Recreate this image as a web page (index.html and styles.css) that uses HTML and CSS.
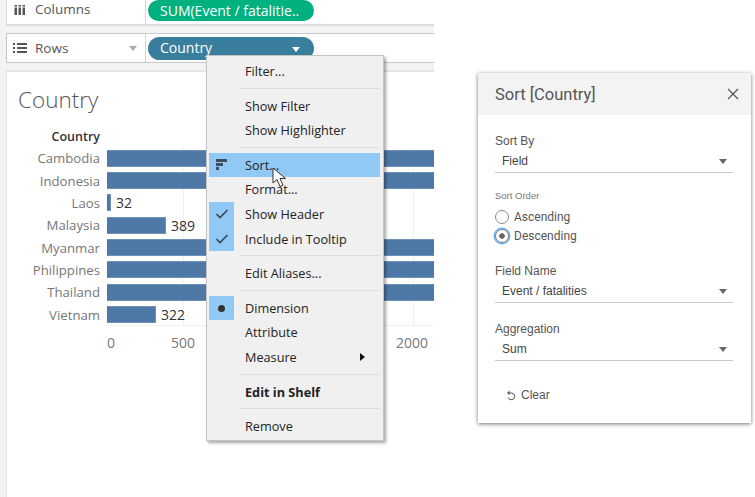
FILE: index.html
```html
<!DOCTYPE html>
<html lang="en">
<head>
<meta charset="utf-8">
<title>Sort Country</title>
<link rel="stylesheet" href="styles.css">
</head>
<body>
<div class="page">
  <section class="workspace">
    <div class="shelf shelf-columns">
      <div class="shelf-label">
        <svg class="shelf-icon" width="12" height="12" viewBox="0 0 12 12"><path d="M.5 4.5H3V12H.5zM4.5 4.5H7V12H4.5zM8.5 4.5H11V12H8.5zM.5 2H3v1.5H.5zM4.5 2H7v1.5H4.5zM8.5 2H11v1.5H8.5z" fill="#555"/></svg>
        <span>Columns</span>
      </div>
      <div class="shelf-body"><div class="pill pill-green">SUM(Event / fatalitie..</div></div>
    </div>
    <div class="shelf shelf-rows">
      <div class="shelf-label">
        <svg class="shelf-icon" width="14" height="12" viewBox="0 0 14 12"><path d="M0 1h2v2H0zM4 1h10v2H4zM0 5h2v2H0zM4 5h10v2H4zM0 9h2v2H0zM4 9h10v2H4z" fill="#555"/></svg>
        <span>Rows</span>
        <i class="shelf-caret"></i>
      </div>
      <div class="shelf-body"><div class="pill pill-blue">Country<i class="pill-caret"></i></div></div>
    </div>
    <div class="sheet">
      <h1 class="sheet-title">Country</h1>
      <div class="chart">
        <div class="col-head">Country</div>
        <div class="plot">
          <i class="grid grid-500"></i>
          <i class="grid grid-2000"></i>
          <div class="row"><span class="row-label">Cambodia</span><span class="bar bar-full"></span></div>
          <div class="row"><span class="row-label">Indonesia</span><span class="bar bar-full"></span></div>
          <div class="row"><span class="row-label">Laos</span><span class="bar" style="width:4px"></span><span class="value">32</span></div>
          <div class="row"><span class="row-label">Malaysia</span><span class="bar" style="width:59px"></span><span class="value">389</span></div>
          <div class="row"><span class="row-label">Myanmar</span><span class="bar bar-full"></span></div>
          <div class="row"><span class="row-label">Philippines</span><span class="bar bar-full"></span></div>
          <div class="row"><span class="row-label">Thailand</span><span class="bar bar-full"></span></div>
          <div class="row"><span class="row-label">Vietnam</span><span class="bar" style="width:49px"></span><span class="value">322</span></div>
        </div>
        <div class="axis"><span class="tick tick-0">0</span><span class="tick tick-500">500</span><span class="tick tick-2000">2000</span></div>
      </div>
    </div>

    <div class="menu">
      <div class="item">Filter...</div>
      <div class="sep sep-a"></div>
      <div class="item">Show Filter</div>
      <div class="item">Show Highlighter</div>
      <div class="sep"></div>
      <div class="item item-active">
        <span class="gutter"><svg width="12" height="12" viewBox="0 0 12 12"><path d="M0 0h11v3H0zM0 4h7v3H0zM0 8h3v3H0z" fill="#3d4f5f"/></svg></span>Sort...
      </div>
      <div class="item">Format...</div>
      <div class="item"><span class="gutter gutter-on"><svg width="14" height="10" viewBox="0 0 14 10"><path d="M1.5 5l3.5 3.5L12.5 1" fill="none" stroke="#3c4650" stroke-width="1.6"/></svg></span>Show Header</div>
      <div class="item"><span class="gutter gutter-on"><svg width="14" height="10" viewBox="0 0 14 10"><path d="M1.5 5l3.5 3.5L12.5 1" fill="none" stroke="#3c4650" stroke-width="1.6"/></svg></span>Include in Tooltip</div>
      <div class="sep"></div>
      <div class="item">Edit Aliases...</div>
      <div class="sep"></div>
      <div class="item"><span class="gutter gutter-on"><i class="dot"></i></span>Dimension</div>
      <div class="item">Attribute</div>
      <div class="item item-sub">Measure<i class="sub-arrow"></i></div>
      <div class="sep"></div>
      <div class="item item-bold">Edit in Shelf</div>
      <div class="sep"></div>
      <div class="item">Remove</div>
    </div>
    <svg class="cursor" width="18" height="22" viewBox="0 0 18 22"><path d="M1 1v15l4-3.5 3 7 3-1.3-3-6.7h5.5z" fill="#fff" stroke="#333" stroke-width="1"/></svg>
  </section>

  <section class="dialog">
    <header class="dialog-head">
      <h2>Sort [Country]</h2>
      <svg width="12" height="12" viewBox="0 0 12 12"><path d="M1 1l10 10M11 1L1 11" stroke="#555" stroke-width="1.2" fill="none"/></svg>
    </header>
    <div class="dialog-body">
      <div class="field">
        <label>Sort By</label>
        <div class="select">Field<i class="select-caret"></i></div>
      </div>
      <div class="order">
        <div class="order-title">Sort Order</div>
        <div class="radio"><i class="radio-mark"></i>Ascending</div>
        <div class="radio"><i class="radio-mark radio-on"></i>Descending</div>
      </div>
      <div class="field field-name">
        <label>Field Name</label>
        <div class="select">Event / fatalities<i class="select-caret"></i></div>
      </div>
      <div class="field field-agg">
        <label>Aggregation</label>
        <div class="select">Sum<i class="select-caret"></i></div>
      </div>
      <div class="clear">
        <svg width="10" height="11" viewBox="0 0 10 11"><path d="M2.6 3H6a3.4 3.4 0 1 1-3.9 4.4" fill="none" stroke="#555" stroke-width="1"/><path d="M3.6 0.6v4.4L1 3z" fill="#555"/></svg>
        <span>Clear</span>
      </div>
    </div>
  </section>
</div>
</body>
</html>
```

FILE: styles.css
```css
* { box-sizing: border-box; }
html, body { margin: 0; padding: 0; }
body { width: 755px; height: 497px; overflow: hidden; background: #fff; font-family: "Liberation Sans", Arial, sans-serif; }
.page { display: flex; height: 497px; }

.workspace { position: relative; width: 434px; height: 497px; flex: none; background: #f3f3f3; padding-left: 6px; }

.shelf { display: flex; background: #fff; font-family: "Open Sans", sans-serif; font-size: 13.5px; color: #555; }
.shelf-columns { height: 26px; border-bottom: 2px solid #dcdcdc; border-left: 1px solid #dcdcdc; }
.shelf-rows { height: 30px; margin-top: 7px; border: 1px solid #c8c8c8; border-width: 1px 0 1px 1px; }
.shelf-label { position: relative; width: 139px; display: flex; align-items: center; border-right: 1px solid #d4d4d4; padding-left: 6px; gap: 8px; flex: none; }
.shelf-columns .shelf-label { padding-left: 7px; gap: 9px; height: 24px; padding-bottom: 6px; }
.shelf-caret { position: absolute; right: 8px; top: 12px; border: 4px solid transparent; border-top: 5px solid #aaa; border-bottom: 0; }
.shelf-body { flex: 1; padding-left: 2px; }
.pill { width: 166px; color: #fff; display: flex; align-items: center; position: relative; font-size: 14px; padding-left: 12px; }
.pill-green { height: 21px; background: #00b180; border-radius: 11px; }
.pill-blue { height: 23px; margin-top: 3px; padding-bottom: 2px; background: #3a7e9e; border-radius: 12px; }
.pill-caret { position: absolute; right: 14px; top: 10px; border: 4px solid transparent; border-top: 5px solid #fff; border-bottom: 0; }

.sheet { margin-top: 7px; height: 430px; background: #fff; border-top: 2px solid #e4e4e4; border-left: 1px solid #e4e4e4; overflow: hidden; }
.sheet-title { margin: 0; padding: 14px 0 0 11px; height: 50px; font: 300 22.5px/28px "Open Sans", sans-serif; color: #555; }
.chart { position: relative; font-family: "Open Sans", sans-serif; font-size: 13.2px; }
.col-head { height: 25px; padding-right: 7px; width: 100px; text-align: right; font-weight: 600; font-size: 12.5px; line-height: 25px; color: #333; padding-top: 2px; }
.plot { position: relative; height: 179px; }
.plot::after { content: ""; position: absolute; left: 100px; right: 0; bottom: 0; height: 1px; background: #f0f0f0; }
.grid { position: absolute; top: 0; bottom: 0; width: 1px; background: #f0f0f0; }
.grid-500 { left: 176px; }
.grid-2000 { left: 406px; }
.row { position: relative; display: flex; align-items: center; height: 22.35px; }
.row-label { width: 93px; text-align: right; color: #777; margin-right: 7px; flex: none; white-space: nowrap; }
.bar { height: 17px; background: #4e79a7; border: 1px solid #6d92b8; border-width: 1px 1px 1px 0; flex: none; }
.bar-full { width: 340px; }
.value { margin-left: 5px; color: #333; font-size: 14px; }
.axis { position: relative; height: 24px; color: #777; font-size: 14px; }
.tick { position: absolute; top: 7px; }
.tick-0 { left: 100px; }
.tick-500 { left: 164px; }
.tick-2000 { left: 389px; }

.menu { position: absolute; left: 206px; top: 55px; width: 178px; height: 386px; background: #f0f0f0; border: 1px solid #c4c4c4; box-shadow: 2px 2px 3px rgba(0,0,0,.35); padding: 3px 3px 0 2px; font-family: "Open Sans", sans-serif; font-size: 12.7px; color: #222; z-index: 2; }
.item { position: relative; height: 24.6px; line-height: 24px; padding-left: 36px; white-space: nowrap; }
.item-active { background: #90c8f6; }
.item-bold { font-weight: 700; }
.gutter { position: absolute; left: 0; top: 0; width: 25px; height: 100%; display: flex; align-items: center; justify-content: center; }
.gutter-on { background: #90c8f6; }
.dot { width: 7px; height: 7px; border-radius: 50%; background: #333; }
.sub-arrow { position: absolute; right: 15px; top: 8px; border: 4px solid transparent; border-left: 5px solid #111; border-right: 0; }
.sep { height: 1px; margin: 4px 0 5px 31px; background: #dcdcdc; }
.sep-a { margin-bottom: 5px; }
.cursor { position: absolute; left: 272px; top: 167px; z-index: 3; }

.dialog { width: 273px; height: 350px; margin: 73px 0 0 44px; background: #fff; box-shadow: 0 1px 4px rgba(0,0,0,.55); display: flex; flex-direction: column; flex: none; }
.dialog-head { height: 42px; background: #f3f3f3; display: flex; align-items: center; justify-content: space-between; padding: 0 12px 0 17px; flex: none; }
.dialog-head h2 { margin: 0; font: 400 16.5px Roboto, sans-serif; color: #555; }
.dialog-body { padding: 0 18px 0 17px; font-size: 12px; color: #444; }
.field { padding-top: 19px; }
.field label { display: block; height: 21px; line-height: 14px; color: #555; }
.select { position: relative; height: 18px; line-height: 13px; padding: 0 0 0 7px; border-bottom: 1px solid #c9c9c9; color: #444; }
.select-caret { position: absolute; right: 6px; top: 4px; border: 4px solid transparent; border-top: 5px solid #666; border-bottom: 0; }
.order { padding-top: 17px; }
.order-title { font-size: 9.5px; color: #777; height: 17px; line-height: 12px; }
.radio { display: flex; align-items: center; gap: 5px; height: 19px; font-family: Roboto, sans-serif; font-size: 12px; color: #555; }
.radio-mark { width: 14px; height: 14px; border: 1px solid #888; border-radius: 50%; flex: none; }
.radio-on { border-color: #777; background: radial-gradient(circle, #666 0 2.5px, #fff 3px); box-shadow: 0 0 0 1.5px #6db4ee; }
.field-name { padding-top: 19px; }
.field-agg { padding-top: 19px; }
.clear { display: flex; align-items: center; gap: 5px; padding: 27px 0 0 11px; color: #555; }
```
